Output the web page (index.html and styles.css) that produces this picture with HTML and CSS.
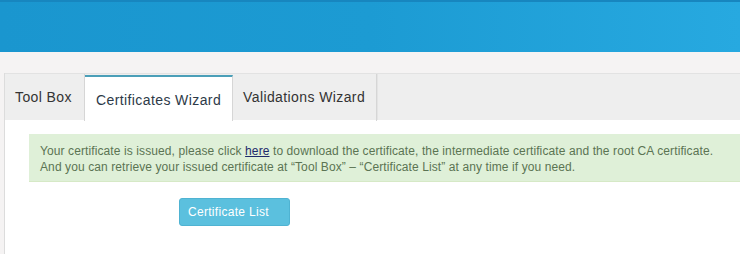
FILE: index.html
```html
<!DOCTYPE html>
<html>
<head>
<meta charset="utf-8">
<link rel="stylesheet" href="styles.css">
</head>
<body>
<div class="header"></div>
<div class="strip"></div>
<div class="panel">
  <div class="tabs">
    <div class="tab">Tool Box</div>
    <div class="tab active">Certificates Wizard</div>
    <div class="tab">Validations Wizard</div>
    <div class="tab-rest"></div>
  </div>
  <div class="content">
    <div class="alert">Your certificate is issued, please click <a href="#">here</a> to download the certificate, the intermediate certificate and the root CA certificate.<br>And you can retrieve your issued certificate at “Tool Box” – “Certificate List” at any time if you need.</div>
    <div class="actions"><button class="btn">Certificate List</button></div>
  </div>
</div>
</body>
</html>
```
FILE: styles.css
```css
html, body {
  margin: 0;
  padding: 0;
  background: #f5f3f3;
  font-family: "Liberation Sans", Arial, sans-serif;
  overflow: hidden;
}
.header {
  height: 52px;
  box-sizing: border-box;
  border-top: 2px solid #1786bf;
  background: linear-gradient(to right, #1a96cf 0%, #1c9bd3 50%, #27a9e0 100%);
}
.strip {
  height: 21px;
}
.panel {
  margin-left: 4px;
  border-left: 1px solid #dcdcdc;
  background: #fff;
  height: 181px;
}
.tabs {
  display: flex;
  height: 47px;
  background: #eeeeee;
  border-top: 1px solid #e2e2e2;
  box-sizing: border-box;
}
.tab {
  box-sizing: border-box;
  height: 47px;
  padding: 0 10px;
  display: flex;
  align-items: center;
  font-size: 14px;
  letter-spacing: 0.4px;
  color: #333;
  border-right: 1px solid #d6d6d6;
  padding-bottom: 2px;
}
.tab:first-child { width: 80px; }
.tab.active {
  width: 148px;
  background: #fff;
  color: #2d3a48;
  border-top: 2px solid #4b9fb8;
  margin-top: 1px;
  height: 46px;
  padding-top: 2px;
  padding-bottom: 0;
  padding-left: 11px;
}
.tab:nth-child(3) { width: 144px; }
.tab-rest {
  flex: 1;
  border-left: 1px solid #e4e4e4;
}
.content {
  padding: 14px 0 0 24px;
}
.alert {
  background: #dff0d8;
  color: #5b7453;
  font-size: 12px;
  letter-spacing: 0.1px;
  line-height: 16px;
  padding: 9px 0 6px 11px;
  border-bottom: 1px solid #d6e9c6;
}
.alert a {
  color: #1e2a6b;
  text-decoration: underline;
}
.actions {
  padding: 16px 0 0 150px;
}
.btn {
  font-family: "Liberation Sans", Arial, sans-serif;
  font-size: 12px;
  letter-spacing: 0.3px;
  color: #fff;
  background: #5bc0de;
  border: 1px solid #4fb3d2;
  border-radius: 3px;
  width: 111px;
  height: 28px;
  text-align: left;
  padding: 0 0 0 8px;
}
```
